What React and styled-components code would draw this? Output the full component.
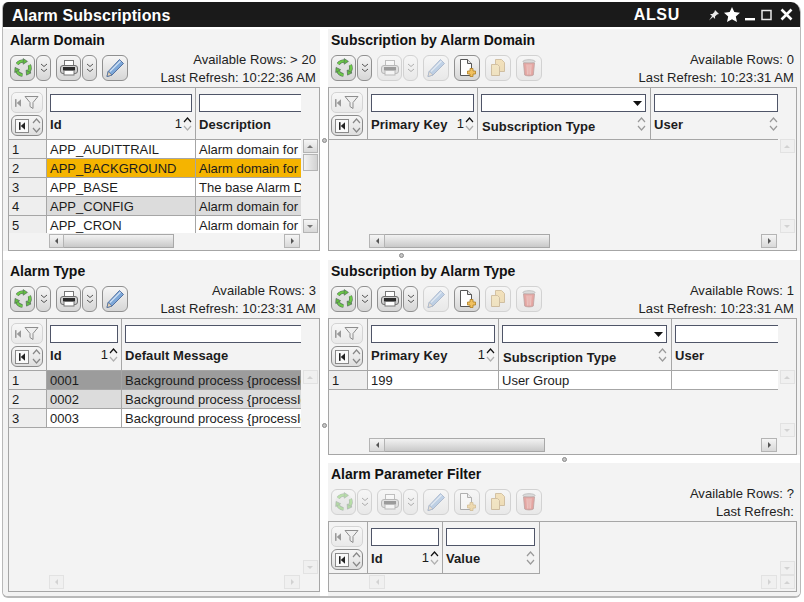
import React from 'react';
import styled, { createGlobalStyle } from 'styled-components';

const Global = createGlobalStyle`
  html, body { margin: 0; padding: 0; background: #fff; }
  body { font-family: "Liberation Sans", Arial, sans-serif; color: #1c1c1c; font-size: 13px; }
`;

const Win = styled.div`
  width: 799px; height: 596px; margin: 2px 0 0 2px;
  display: flex; flex-direction: column; box-sizing: border-box;
  border-radius: 6px 10px 6px 6px; overflow: hidden;
  border: solid #b9b9b9; border-width: 0 1px 2px 1px; background: #fff;
`;
const TitleBar = styled.div`
  height: 25px; flex: none; background: #1a1a1a; color: #fff; display: flex; align-items: center;
  padding: 0 8px 0 10px; font-weight: bold; font-size: 16px; margin: 0 -1px;
`;
const TitleText = styled.div` flex: 1; padding-top: 2px; letter-spacing: .1px; `;
const AppCode = styled.div` margin-right: 28px; padding-top: 1px; letter-spacing: .7px; `;
const WinIcons = styled.div`
  display: flex; align-items: center; gap: 5px;
  & > svg:first-child { margin-right: -1px; }
  & > svg:nth-child(4) { margin-right: 2px; }
`;

const Row = styled.div`
  display: flex; flex: ${p => p.$grow ? '1' : 'none'}; min-height: 0; box-sizing: border-box;
  height: ${p => p.$h ? p.$h + 'px' : 'auto'}; padding-top: ${p => p.$pt || 0}px;
`;
const Stack = styled.div` flex: 1; display: flex; flex-direction: column; min-width: 0; `;
const VSplit = styled.div`
  width: 8px; flex: none; display: flex; align-items: center; justify-content: center;
  padding-bottom: ${p => p.$pb || 0}px; box-sizing: border-box;
`;
const HSplit = styled.div`
  height: ${p => p.$h}px; flex: none; display: flex; align-items: center; justify-content: center;
`;
const Dot = styled.span`
  width: 5px; height: 5px; border-radius: 50%; background: #c4c4c4; border: 1px solid #8a8a8a; box-sizing: border-box;
`;

const Panel = styled.section`
  background: #f3f3f3; display: flex; flex-direction: column; box-sizing: border-box; min-height: 0; min-width: 0;
  flex: ${p => p.$fixed ? 'none' : '1'};
  width: ${p => p.$w ? p.$w + 'px' : 'auto'};
  height: ${p => p.$ph ? p.$ph + 'px' : 'auto'};
  padding: 0 ${p => p.$left ? 0 : 3}px ${p => p.$pb || 0}px ${p => p.$left ? 5 : 0}px;
`;
const PanelHead = styled.div`
  height: 58px; flex: none; box-sizing: border-box;
  padding: 0 ${p => p.$left ? 4 : 3}px 0 ${p => p.$left ? 2 : 3}px;
`;
const PanelTitle = styled.h2` margin: 0; font-size: 14px; font-weight: bold; line-height: 22px; height: 22px; color: #111; `;
const HeadRow = styled.div` display: flex; justify-content: space-between; `;
const Toolbar = styled.div` display: flex; margin-top: 4px; `;
const Status = styled.div` text-align: right; line-height: 18px; margin-top: 0; color: #222; white-space: nowrap; letter-spacing: .06px; `;

const ToolBtn = styled.div`
  width: ${p => p.$w}px; height: 26px; box-sizing: border-box; flex: none;
  margin-right: ${p => p.$gap}px; border-radius: 6px;
  border: 1px solid ${p => p.$off ? '#d2d2d2' : '#909090'};
  background: ${p => p.$off ? 'linear-gradient(#f6f6f6,#e8e8e8)' : 'linear-gradient(#f6f6f6,#d6d6d6)'};
  display: flex; align-items: center; justify-content: center;
  & > svg { opacity: ${p => p.$off ? .42 : 1}; }
`;

const Frame = styled.div`
  flex: 1; min-height: 0; border: 1px solid #a6a6a6; display: grid; box-sizing: border-box;
  grid-template-columns: minmax(0, 1fr) 18px; grid-template-rows: minmax(0, 1fr) 17px;
`;
const Viewport = styled.div` overflow: hidden; min-width: 0; min-height: 0; `;
const HeadRowEl = styled.div`
  display: flex; height: 52px; box-sizing: border-box; border-bottom: 1px solid #a6a6a6;
  width: ${p => p.$w ? p.$w + 'px' : '100%'};
`;
const Corner = styled.div`
  width: ${p => p.$w}px; flex: none; box-sizing: border-box; border-right: 1px solid #a6a6a6; padding: 4px 0 0 2px;
`;
const FilterBtn = styled.div`
  width: 32px; height: 21px; box-sizing: border-box; border: 1px solid #d4d4d4; border-radius: 5px;
  background: linear-gradient(#f7f7f7,#e9e9e9); display: flex; align-items: center; justify-content: center; gap: 3px;
`;
const NavGroup = styled.div`
  width: 32px; height: 21px; margin-top: 2px; box-sizing: border-box; border: 1px solid #8b8b8b; border-radius: 6px;
  background: linear-gradient(#f6f6f6,#dedede); display: flex; align-items: center; padding-left: 3px; gap: 3px;
`;
const NavFirst = styled.div`
  width: 14px; height: 14px; box-sizing: border-box; border: 1px solid #8a8a8a; background: #fafafa;
  display: flex; align-items: center; justify-content: center;
`;
const ColHead = styled.div`
  width: ${p => p.$w}px; flex: none; box-sizing: border-box; border-right: ${p => p.$open ? 0 : 1}px solid #a6a6a6;
  padding: 6px 2px 0 3px; overflow: hidden;
`;
const FilterBox = styled.div`
  height: 18px; box-sizing: border-box; border: 1px solid #4f5568; background: #fff; width: ${p => p.$w}px;
  display: flex; align-items: center; justify-content: flex-end; padding-right: 3px;
`;
const LabelLine = styled.div`
  display: flex; align-items: center; height: 21px; margin-top: 2px; font-weight: bold; white-space: nowrap; color: #1c1c1c;
  width: ${p => p.$w}px;
`;
const LabelText = styled.span`
  flex: 1; padding-top: ${p => p.$down ? 3 : 0}px; padding-left: ${p => p.$down ? 1 : 0}px; letter-spacing: .05px;
`;
const SortNum = styled.span` font-weight: normal; margin-right: 1px; margin-top: -3px; `;
const SortArrows = styled.span` display: flex; flex-direction: column; gap: 2px; width: 9px; margin-top: -2px; `;
const NavArrows = styled.span` display: flex; flex-direction: column; gap: 3px; width: 8px; `;
const DataRow = styled.div`
  display: flex; height: 19px; box-sizing: border-box; border-bottom: 1px solid #a6a6a6;
  background: ${p => p.$bg || '#fff'}; line-height: 20px;
`;
const RowNum = styled.div`
  width: ${p => p.$w}px; flex: none; box-sizing: border-box; background: #eeeeee; border-right: 1px solid #a6a6a6; padding-left: 3px;
`;
const Cell = styled.div`
  width: ${p => p.$w}px; flex: none; box-sizing: border-box; padding-left: 3px; white-space: nowrap; overflow: hidden;
  border-right: ${p => p.$open ? 0 : 1}px solid #a6a6a6;
`;

const VBar = styled.div`
  display: flex; flex-direction: column; justify-content: space-between; align-items: center; padding-top: ${p => p.$top}px; box-sizing: border-box;
  & > div:only-child { margin-top: auto; }
`;
const HBar = styled.div`
  display: flex; align-items: flex-start; padding: 1px 1px 0 40px; min-width: 0;
`;
const CornerCell = styled.div` display: flex; justify-content: center; padding-top: 1px; `;
const SBtn = styled.div`
  width: ${p => p.$bw || 15}px; height: 14px; box-sizing: border-box; flex: none; border: 1px solid ${p => p.$off ? '#e2e2e2' : '#b4b4b4'};
  background: ${p => p.$off ? '#f0f0f0' : 'linear-gradient(#f5f5f5,#d8d8d8)'};
  display: flex; align-items: center; justify-content: center;
`;
const Arrow = styled.i`
  width: 0; height: 0; display: block; border: 3px solid transparent;
  ${p => p.$d === 'l' && `border-right-color:${p.$off ? '#d2d2d2' : '#555'}; border-left-width:0;`}
  ${p => p.$d === 'r' && `border-left-color:${p.$off ? '#d2d2d2' : '#555'}; border-right-width:0;`}
  ${p => p.$d === 'u' && `border-bottom-color:${p.$off ? '#d2d2d2' : '#777'}; border-top-width:0;`}
  ${p => p.$d === 'd' && `border-top-color:${p.$off ? '#d2d2d2' : '#777'}; border-bottom-width:0;`}
`;
const VThumb = styled.div`
  width: 15px; height: 17px; box-sizing: border-box; margin-top: 1px; border: 1px solid #b4b4b4; background: linear-gradient(90deg,#f2f2f2,#d2d2d2);
`;
const VGroup = styled.div` display: flex; flex-direction: column; `;
const HThumb = styled.div`
  width: ${p => p.$w}px; height: 14px; flex: none; box-sizing: border-box; border: 1px solid #a8a8a8; border-left: 0;
  background: linear-gradient(#f2f2f2,#c9c9c9);
`;
const Spacer = styled.div` flex: 1; `;

/* ---------- icons ---------- */
const RefreshIcon = () => (
  <svg width="20" height="20" viewBox="0 0 20 20">
    <circle cx="10" cy="10" r="8.500" fill="#dedede" opacity=".8" />
    {[0, 120, 240].map(a => (
      <g key={a} transform={`rotate(${a} 10 10)`}>
        <path d="M4.200 6A7 7 0 0 1 10.500 3.200" fill="none" stroke="#55705a" strokeWidth="3.400" />
        <path d="M4.200 6A7 7 0 0 1 10.500 3.200" fill="none" stroke="#6cc848" strokeWidth="2.200" />
        <path d="M10.200 .6L14.400 3.400l-4.200 2.800z" fill="#62c03e" stroke="#55705a" strokeWidth=".7" />
      </g>
    ))}
  </svg>
);
const PrintIcon = () => (
  <svg width="20" height="20" viewBox="0 0 20 20">
    <rect x="5.500" y="2.500" width="9" height="6" fill="#fff" stroke="#777" />
    <rect x="1.500" y="7.500" width="17" height="8" rx="2.500" fill="#cfcfcf" stroke="#6d6d6d" />
    <rect x="4" y="9" width="12" height="3.400" fill="#2a2a2a" />
    <rect x="5" y="12.500" width="10" height="4.500" fill="#fff" stroke="#777" />
  </svg>
);
const PencilIcon = () => (
  <svg width="20" height="20" viewBox="0 0 20 20">
    <path d="M2 18.500l1.200-5L14.500 1.500l4 4-11.500 11.500z" fill="#7da7d8" stroke="#48689a" strokeWidth=".9" strokeLinejoin="round" />
    <path d="M5 13.500L15.500 3" stroke="#cfe0f4" strokeWidth="1.300" />
    <path d="M2 18.500l1.200-5 3.800 3.500z" fill="#e7d3b5" stroke="#48689a" strokeWidth=".7" />
  </svg>
);
const DoubleChev = () => (
  <svg width="8" height="10" viewBox="0 0 8 10" fill="none" stroke="#555" strokeWidth="1">
    <path d="M1 1l3 2.500L7 1M1 6l3 2.500L7 6" />
  </svg>
);
const NewIcon = () => (
  <svg width="20" height="20" viewBox="0 0 20 20">
    <path d="M3.500 1.500h7l4 4v12h-11z" fill="#fff" stroke="#555" />
    <path d="M10.500 1.500v4h4" fill="#e4e4e4" stroke="#555" />
    <path d="M13 10.500h3v2.500h2.500v3H16v2.500h-3V16h-2.500v-3H13z" fill="#f0c060" stroke="#b07f20" strokeWidth=".8" />
  </svg>
);
const CopyIcon = () => (
  <svg width="20" height="20" viewBox="0 0 20 20">
    <path d="M7.500 1.500h6l3 3v9h-9z" fill="#f0c870" stroke="#a87f3a" />
    <path d="M3.500 6.500h6l2 2v9h-8z" fill="#f5d688" stroke="#a87f3a" />
  </svg>
);
const TrashIcon = () => (
  <svg width="20" height="20" viewBox="0 0 20 20">
    <ellipse cx="10" cy="3.500" rx="6" ry="1.800" fill="#bbb" stroke="#666" strokeWidth=".8" />
    <path d="M4.500 5l1.200 12c2 1.200 6.600 1.200 8.600 0L15.500 5z" fill="#d8433a" stroke="#7a3a36" strokeWidth=".8" />
    <path d="M8 6.500l.4 10M10 6.500v10M12 6.500l-.4 10" stroke="#f0b0a8" strokeWidth=".8" />
  </svg>
);
const First = ({ c = '#333' }) => (
  <svg width="6" height="8" viewBox="0 0 7 9"><rect x="0" y="0" width="1.800" height="9" fill={c} /><path d="M7 0v9L2 4.500z" fill={c} /></svg>
);
const Funnel = () => (
  <svg width="15" height="15" viewBox="0 0 15 15">
    <path d="M1 1.500h13L9 7.500v6l-3-2v-4z" fill="#efefef" stroke="#8d8d8d" />
  </svg>
);
const Chev = ({ up, c }) => (
  <svg width="9" height="6" viewBox="0 0 9 6" fill="none" stroke={c} strokeWidth="1.200">
    <path d={up ? 'M1 5l3.500-4L8 5' : 'M1 1l3.500 4L8 1'} />
  </svg>
);
const PinIcon = () => (
  <svg width="12" height="12" viewBox="0 0 12 12">
    <path d="M7 1l4 4-2 .6-2 2 .1 2.400L5 8 1 11.500 4 7 2 5l2.400-.1 2-2z" fill="#e8e8e8" />
  </svg>
);
const StarIcon = () => (
  <svg width="16" height="15" viewBox="0 0 16 15"><path d="M8 0l2.300 5.100 5.700.6-4.200 3.800 1.200 5.500L8 12.200 3 15l1.200-5.500L0 5.700l5.700-.6z" fill="#fff" /></svg>
);
const MinIcon = () => (<svg width="11" height="12" viewBox="0 0 11 12"><rect x="0" y="9" width="10" height="2.400" fill="#fff" /></svg>);
const MaxIcon = () => (<svg width="12" height="12" viewBox="0 0 12 12"><rect x="1" y="1.500" width="9" height="9" fill="none" stroke="#e8e8e8" strokeWidth="1.500" /></svg>);
const CloseIcon = () => (
  <svg width="13" height="13" viewBox="0 0 13 13"><path d="M1.500 1.500l10 10M11.500 1.500l-10 10" stroke="#fff" strokeWidth="2.600" /></svg>
);

/* ---------- parts ---------- */
const TOOLS = [
  ['refresh', RefreshIcon, 25, 1],
  ['m1', DoubleChev, 15, 5],
  ['print', PrintIcon, 25, 1],
  ['m2', DoubleChev, 15, 5],
  ['edit', PencilIcon, 26, 5],
  ['add', NewIcon, 26, 5],
  ['copy', CopyIcon, 26, 5],
  ['del', TrashIcon, 26, 0],
];

const Tools = ({ count, off }) => (
  <Toolbar>
    {TOOLS.slice(0, count).map(([id, Icon, w, gap]) => (
      <ToolBtn key={id} $w={w} $gap={gap} $off={off.includes(id)}><Icon /></ToolBtn>
    ))}
  </Toolbar>
);

const Column = ({ c }) => (
  <ColHead $w={c.w} $open={c.open}>
    <FilterBox $w={c.input}>
      {c.select && <svg width="9" height="5" viewBox="0 0 9 5"><path d="M0 0h9L4.500 5z" fill="#111" /></svg>}
    </FilterBox>
    <LabelLine $w={c.input}>
      <LabelText $down={c.select}>{c.title}</LabelText>
      {c.sort && <SortNum>1</SortNum>}
      <SortArrows>
        <Chev up c={c.sort ? '#111' : '#9a9a9a'} />
        <Chev c={c.sort ? '#b0b0b0' : '#9a9a9a'} />
      </SortArrows>
    </LabelLine>
  </ColHead>
);

const Grid = ({ cols, rows = [], thumb, hOff, vOff, vthumb, top = 51, corner, hw, cw = 38, lw = 16 }) => (
  <Frame>
    <Viewport>
      <HeadRowEl $w={hw}>
        <Corner $w={cw}>
          <FilterBtn><First c="#999" /><Funnel /></FilterBtn>
          <NavGroup>
            <NavFirst><First c="#222" /></NavFirst>
            <NavArrows><Chev up c="#888" /><Chev c="#888" /></NavArrows>
          </NavGroup>
        </Corner>
        {cols.map(c => <Column key={c.title} c={c} />)}
      </HeadRowEl>
      {rows.map((r, i) => (
        <DataRow key={i} $bg={r.bg}>
          <RowNum $w={cw}>{i + 1}</RowNum>
          {r.cells.map((t, j) => <Cell key={j} $w={cols[j].w} $open={cols[j].open}>{t}</Cell>)}
        </DataRow>
      ))}
    </Viewport>
    <VBar $top={top}>
      {!corner && <VGroup><SBtn $off={vOff}><Arrow $d="u" $off={vOff} /></SBtn>{vthumb && <VThumb />}</VGroup>}
      <SBtn $off={vOff}><Arrow $d="d" $off={vOff} /></SBtn>
    </VBar>
    <HBar>
      <SBtn $bw={lw} $off={hOff}><Arrow $d="l" $off={hOff} /></SBtn>
      {thumb && <HThumb $w={thumb} />}
      <Spacer />
      <SBtn $bw={16} $off={hOff}><Arrow $d="r" $off={hOff} /></SBtn>
    </HBar>
    <CornerCell>
      {corner && <SBtn $off={vOff}><Arrow $d="u" $off={vOff} /></SBtn>}
    </CornerCell>
  </Frame>
);

const Head = ({ left, title, count, off, rows, refresh }) => (
  <PanelHead $left={left}>
    <PanelTitle>{title}</PanelTitle>
    <HeadRow>
      <Tools count={count} off={off} />
      <Status>
        <div>Available Rows: {rows}</div>
        <div>Last Refresh:{refresh ? ' ' + refresh : ''}</div>
      </Status>
    </HeadRow>
  </PanelHead>
);

const D = 'Alarm domain for application';
const domainRows = [
  { cells: ['APP_AUDITTRAIL', D] },
  { bg: '#f5b400', cells: ['APP_BACKGROUND', D] },
  { cells: ['APP_BASE', 'The base Alarm Domain'] },
  { bg: '#dcdcdc', cells: ['APP_CONFIG', D] },
  { cells: ['APP_CRON', D] },
];
const M = 'Background process {processId}';
const typeRows = [
  { bg: '#9c9c9c', cells: ['0001', M] },
  { bg: '#dcdcdc', cells: ['0002', M] },
  { cells: ['0003', M] },
];

export default function App() {
  return (
    <>
      <Global />
      <Win>
        <TitleBar>
          <TitleText>Alarm Subscriptions</TitleText>
          <AppCode>ALSU</AppCode>
          <WinIcons><PinIcon /><StarIcon /><MinIcon /><MaxIcon /><CloseIcon /></WinIcons>
        </TitleBar>

        <Row $h={224} $pt={2}>
          <Panel $left $fixed $w={317}>
            <Head left title="Alarm Domain" count={5} off={[]} rows="> 20" refresh="10:22:36 AM" />
            <Grid
              rows={domainRows} thumb={110} lw={15} vthumb
              cols={[
                { title: 'Id', w: 149, input: 142, sort: true },
                { title: 'Description', w: 320, input: 300, open: true },
              ]}
            />
          </Panel>
          <VSplit><Dot /></VSplit>
          <Panel>
            <Head title="Subscription by Alarm Domain" count={8} off={['print', 'm2', 'edit', 'copy', 'del']} rows="0" refresh="10:23:31 AM" />
            <Grid
              thumb={165} cw={39} vOff
              cols={[
                { title: 'Primary Key', w: 110, input: 103, sort: true },
                { title: 'Subscription Type', w: 173, input: 165, select: true },
                { title: 'User', w: 129, input: 124, open: true },
              ]}
            />
          </Panel>
        </Row>

        <HSplit $h={9}><Dot /></HSplit>

        <Row $grow>
          <Panel $left $fixed $w={317} $pb={4}>
            <Head left title="Alarm Type" count={5} off={[]} rows="3" refresh="10:23:31 AM" />
            <Grid
              rows={typeRows} hOff vOff lw={15}
              cols={[
                { title: 'Id', w: 75, input: 68, sort: true },
                { title: 'Default Message', w: 320, input: 300, open: true },
              ]}
            />
          </Panel>
          <VSplit $pb={5}><Dot /></VSplit>
          <Stack>
            <Panel>
              <Head title="Subscription by Alarm Type" count={8} off={['edit', 'copy', 'del']} rows="1" refresh="10:23:31 AM" />
              <Grid
                thumb={160} cw={39} vOff
                rows={[{ cells: ['199', 'User Group', ''] }]}
                cols={[
                  { title: 'Primary Key', w: 131, input: 124, sort: true },
                  { title: 'Subscription Type', w: 173, input: 165, select: true },
                  { title: 'User', w: 146, input: 140, open: true },
                ]}
              />
            </Panel>
            <HSplit $h={8}><Dot /></HSplit>
            <Panel $fixed $ph={133} $pb={4}>
              <Head title="Alarm Parameter Filter" count={8} off={['refresh', 'm1', 'print', 'm2', 'edit', 'add', 'copy', 'del']} rows="?" />
              <Grid
                hOff vOff corner top={39} hw={211} cw={39}
                cols={[
                  { title: 'Id', w: 75, input: 68, sort: true },
                  { title: 'Value', w: 97, input: 89 },
                ]}
              />
            </Panel>
          </Stack>
        </Row>
      </Win>
    </>
  );
}
